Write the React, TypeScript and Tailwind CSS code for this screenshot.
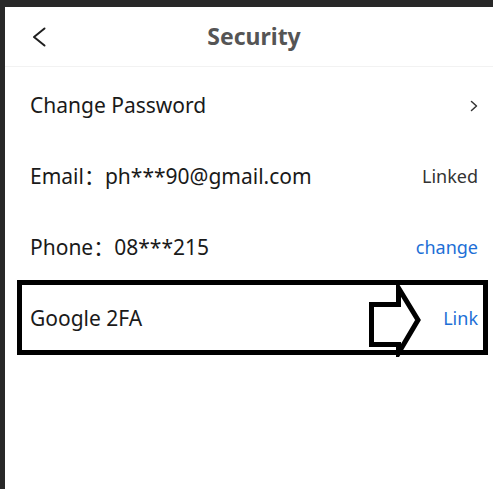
import React from "react";

type Row = {
  label: string;
  right?: React.ReactNode;
};

function BackIcon() {
  return (
    <svg width="14" height="20" viewBox="0 0 14 20" fill="none">
      <polyline
        points="12.5,1.5 2,10 12.5,18.5"
        stroke="#1f1f1f"
        strokeWidth="2"
        strokeLinecap="round"
        strokeLinejoin="round"
      />
    </svg>
  );
}

function ChevronIcon() {
  return (
    <svg width="8" height="12" viewBox="0 0 8 12" fill="none">
      <polyline
        points="1.5,1.5 6.5,6 1.5,10.5"
        stroke="#333"
        strokeWidth="1.5"
        strokeLinecap="round"
        strokeLinejoin="round"
      />
    </svg>
  );
}

// hollow arrow pointing at the action on the highlighted row
function PointerArrow() {
  return (
    <svg width="58" height="72" viewBox="0 0 58 72" fill="none">
      <polygon
        points="4.5,19.5 31.5,19.5 31.5,3 51,35 31.5,68 31.5,59.5 4.5,59.5"
        stroke="#000"
        strokeWidth="5"
        strokeLinejoin="miter"
        fill="#fff"
      />
    </svg>
  );
}

const rows: Row[] = [
  { label: "Change Password", right: <ChevronIcon /> },
  {
    label: "Email：ph***90@gmail.com",
    right: <span className="text-[18px] text-[#333]">Linked</span>,
  },
  {
    label: "Phone：08***215",
    right: <span className="text-[18px] text-[#1d6fd6]">change</span>,
  },
];

export default function App() {
  return (
    <div className="h-[489px] w-[493px] overflow-hidden bg-[#282828] pl-[5px] pt-[7px]">
      <div className="h-[482px] w-[498px] bg-white font-['Noto_Sans','Noto_Sans_CJK_SC',sans-serif] text-[#1a1a1a]">
        <div className="grid h-[60px] grid-cols-[1fr_auto_1fr] items-center border-b border-[#f2f2f2]">
          <div className="pl-[27px] pt-[1px]">
            <BackIcon />
          </div>
          <h1 className="text-[23px] font-bold text-[#555]">Security</h1>
          <div />
        </div>

        <div className="pt-[3px]">
          {rows.map((row) => (
            <div
              key={row.label}
              className="flex h-[71px] items-center justify-between px-[25px]"
            >
              <span className="text-[21px]">{row.label}</span>
              {row.right}
            </div>
          ))}

          <div className="relative flex h-[71px] items-center justify-between px-[25px]">
            <span className="text-[21px]">Google 2FA</span>
            <span className="text-[18px] text-[#1d6fd6]">Link</span>

            <div className="pointer-events-none absolute left-[12px] top-[-3px] h-[75px] w-[471px] border-[5px] border-black" />
            <div className="pointer-events-none absolute left-[362px] top-[2px]">
              <PointerArrow />
            </div>
          </div>
        </div>
      </div>
    </div>
  );
}
